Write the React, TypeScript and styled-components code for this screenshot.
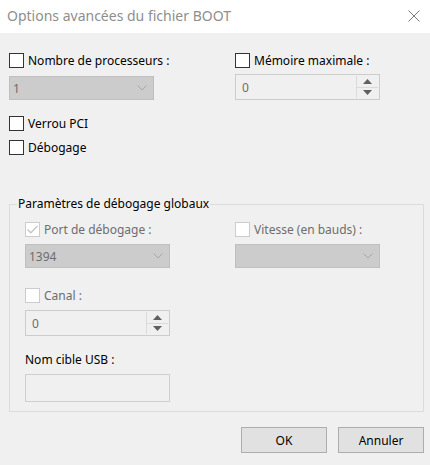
import React from "react";
import styled, { createGlobalStyle } from "styled-components";

const Global = createGlobalStyle`
  html, body { margin: 0; padding: 0; background: #f0f0f0; }
  body { font-family: "Noto Sans", "Segoe UI", sans-serif; }
`;

const Window = styled.div`
  width: 430px;
  height: 465px;
  background: #f0f0f0;
  display: flex;
  flex-direction: column;
  font-size: 12px;
  color: #000;
  overflow: hidden;
`;

const TitleBar = styled.div`
  height: 33px;
  background: #ffffff;
  display: flex;
  align-items: center;
  justify-content: space-between;
  padding: 0 9px 0 7px;
  flex-shrink: 0;
`;

const Title = styled.div`
  font-size: 14px;
  color: #8e8e8e;
  margin-top: -2px;
`;

const CloseButton = styled.div`
  width: 14px;
  height: 14px;
  display: flex;
  align-items: center;
  justify-content: center;
  margin-top: -2px;
`;

const Content = styled.div`
  padding: 20px 6px 0 9px;
  display: flex;
  flex-direction: column;
`;

const TwoCols = styled.div<{ $left: number }>`
  display: grid;
  grid-template-columns: ${(p) => p.$left}px 1fr;
`;

const Col = styled.div`
  display: flex;
  flex-direction: column;
  align-items: flex-start;
`;

const CheckRow = styled.label<{ $mt?: number; $disabled?: boolean }>`
  display: flex;
  align-items: center;
  height: 15px;
  line-height: 15px;
  gap: 4px;
  margin-top: ${(p) => p.$mt ?? 0}px;
  color: ${(p) => (p.$disabled ? "#6d6d6d" : "#000")};
  white-space: nowrap;
`;

const Box = styled.span<{ $disabled?: boolean }>`
  width: 15px;
  height: 15px;
  box-sizing: border-box;
  border: 1px solid ${(p) => (p.$disabled ? "#cccccc" : "#333333")};
  background: #fff;
  display: flex;
  align-items: center;
  justify-content: center;
  flex-shrink: 0;
`;

const Combo = styled.div<{ $mt?: number }>`
  width: 145px;
  height: 24px;
  box-sizing: border-box;
  margin-top: ${(p) => p.$mt ?? 0}px;
  background: #cccccc;
  border: 1px solid #bfbfbf;
  display: flex;
  align-items: center;
  justify-content: space-between;
  padding: 0 6px 0 3px;
  color: #6d6d6d;
`;

const Spin = styled.div<{ $mt?: number }>`
  width: 145px;
  height: 26px;
  box-sizing: border-box;
  margin-top: ${(p) => p.$mt ?? 0}px;
  background: #f0f0f0;
  border: 1px solid #cccccc;
  display: flex;
  align-items: stretch;
  color: #6d6d6d;
`;

const SpinValue = styled.div`
  flex: 1;
  display: flex;
  align-items: center;
  padding-left: 6px;
`;

const SpinButtons = styled.div`
  width: 21px;
  display: flex;
  flex-direction: column;
  border-left: 1px solid #dadada;
  margin: 1px 1px 1px 0;
`;

const SpinBtn = styled.div<{ $top?: boolean }>`
  flex: 1;
  display: flex;
  align-items: center;
  justify-content: center;
  border-bottom: ${(p) => (p.$top ? "1px solid #dadada" : "none")};
`;

const Group = styled.fieldset`
  margin: 41px 0 0 0;
  padding: 10px 6px 9px 15px;
  border: 1px solid #dcdcdc;
  min-width: 0;
  width: 415px;
  box-sizing: border-box;
`;

const Legend = styled.legend`
  padding: 0 1px;
  margin-left: -8px;
  line-height: 16px;
  font-size: 12px;
  color: #000;
`;

const PlainLabel = styled.div<{ $mt?: number }>`
  height: 15px;
  line-height: 15px;
  margin-top: ${(p) => p.$mt ?? 0}px;
`;

const TextBox = styled.div<{ $mt?: number }>`
  width: 145px;
  height: 28px;
  box-sizing: border-box;
  margin-top: ${(p) => p.$mt ?? 0}px;
  background: #f0f0f0;
  border: 1px solid #cfcfcf;
`;

const Buttons = styled.div`
  display: flex;
  justify-content: flex-end;
  gap: 11px;
  margin-top: 15px;
`;

const Button = styled.div`
  width: 86px;
  height: 26px;
  box-sizing: border-box;
  background: #e1e1e1;
  border: 1px solid #adadad;
  display: flex;
  align-items: center;
  justify-content: center;
  color: #000;
`;

const Chevron = () => (
  <svg width="10" height="6" viewBox="0 0 10 6">
    <polyline points="0.5,0.5 5,5 9.5,0.5" fill="none" stroke="#a6a6a6" strokeWidth="1" />
  </svg>
);

const UpArrow = () => (
  <svg width="9" height="5" viewBox="0 0 9 5">
    <polygon points="4.5,0 9,5 0,5" fill="#606060" />
  </svg>
);

const DownArrow = () => (
  <svg width="9" height="5" viewBox="0 0 9 5">
    <polygon points="0,0 9,0 4.5,5" fill="#606060" />
  </svg>
);

const Check = () => (
  <svg width="11" height="9" viewBox="0 0 11 9">
    <polyline points="0.5,4.5 3.8,7.8 10.5,1" fill="none" stroke="#c4c4c4" strokeWidth="1.3" />
  </svg>
);

const CheckBox: React.FC<{ label: string; mt?: number; disabled?: boolean; checked?: boolean }> = ({
  label,
  mt,
  disabled,
  checked,
}) => (
  <CheckRow $mt={mt} $disabled={disabled}>
    <Box $disabled={disabled}>{checked && <Check />}</Box>
    <span>{label}</span>
  </CheckRow>
);

const SpinBox: React.FC<{ value: string; mt?: number }> = ({ value, mt }) => (
  <Spin $mt={mt}>
    <SpinValue>{value}</SpinValue>
    <SpinButtons>
      <SpinBtn $top>
        <UpArrow />
      </SpinBtn>
      <SpinBtn>
        <DownArrow />
      </SpinBtn>
    </SpinButtons>
  </Spin>
);

export default function App() {
  return (
    <>
      <Global />
      <Window>
        <TitleBar>
          <Title>Options avancées du fichier BOOT</Title>
          <CloseButton>
            <svg width="12" height="12" viewBox="0 0 12 12">
              <path d="M0.5 0.5 L11.5 11.5 M11.5 0.5 L0.5 11.5" stroke="#7a7a7a" strokeWidth="1" fill="none" />
            </svg>
          </CloseButton>
        </TitleBar>
        <Content>
          <TwoCols $left={226}>
            <Col>
              <CheckBox label="Nombre de processeurs :" />
              <Combo $mt={8}>
                <span>1</span>
                <Chevron />
              </Combo>
            </Col>
            <Col>
              <CheckBox label="Mémoire maximale :" />
              <SpinBox value="0" mt={6} />
            </Col>
          </TwoCols>
          <CheckBox label="Verrou PCI" mt={16} />
          <CheckBox label="Débogage" mt={9} />
          <Group>
            <Legend>Paramètres de débogage globaux</Legend>
            <TwoCols $left={210}>
              <Col>
                <CheckBox label="Port de débogage :" disabled checked />
                <Combo $mt={7}>
                  <span>1394</span>
                  <Chevron />
                </Combo>
                <CheckBox label="Canal :" disabled mt={20} />
                <SpinBox value="0" mt={7} />
                <PlainLabel $mt={16}>Nom cible USB :</PlainLabel>
                <TextBox $mt={7} />
              </Col>
              <Col>
                <CheckBox label="Vitesse (en bauds) :" disabled />
                <Combo $mt={7}>
                  <span></span>
                  <Chevron />
                </Combo>
              </Col>
            </TwoCols>
          </Group>
          <Buttons>
            <Button>OK</Button>
            <Button>Annuler</Button>
          </Buttons>
        </Content>
      </Window>
    </>
  );
}
